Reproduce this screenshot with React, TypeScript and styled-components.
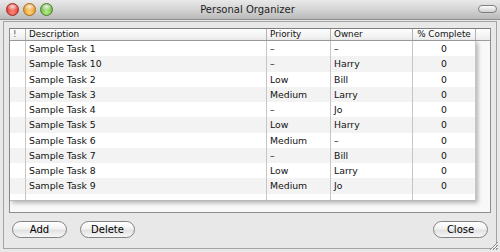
import React from "react";
import styled, { createGlobalStyle } from "styled-components";

const GlobalStyle = createGlobalStyle`
  html, body { margin: 0; padding: 0; }
  body {
    width: 500px;
    height: 252px;
    overflow: hidden;
    background: #e8e8e8;
    font-family: "DejaVu Sans", "Liberation Sans", sans-serif;
    color: #000;
  }
  * { box-sizing: border-box; }
`;

const Window = styled.div`
  position: relative;
  width: 500px;
  height: 252px;
  display: flex;
  flex-direction: column;
  background: #e8e8e8;
`;

const TitleBar = styled.div`
  flex: none;
  height: 20px;
  display: grid;
  grid-template-columns: 1fr auto 1fr;
  align-items: center;
  background: linear-gradient(#e9e9e9 0%, #d4d4d4 50%, #b9b9b9 100%);
  border-bottom: 1px solid #8e8e8e;
`;

const Lights = styled.div`
  display: flex;
  gap: 4px;
  padding-left: 6px;
`;

const Light = styled.span<{ $c1: string; $c2: string; $edge: string }>`
  width: 13px;
  height: 13px;
  border-radius: 50%;
  border: 1px solid ${(p) => p.$edge};
  background:
    radial-gradient(ellipse 60% 40% at 50% 22%, rgba(255,255,255,0.85), rgba(255,255,255,0) 100%),
    radial-gradient(circle at 50% 75%, ${(p) => p.$c1} 0%, ${(p) => p.$c2} 80%);
`;

const Title = styled.div`
  font-size: 10px;
  color: #1e1e1e;
  padding-right: 5px;
  line-height: 12px;
`;

const Pill = styled.span`
  justify-self: end;
  margin-right: 3px;
  margin-top: -1px;
  width: 19px;
  height: 8px;
  border-radius: 4px;
  border: 1px solid #7f7f7f;
  background: linear-gradient(#fdfdfd, #cfcfcf);
`;

const Frame = styled.div`
  flex: 1;
  margin: 1px 3px 3px;
  border: 1px solid #a4a4a4;
  display: flex;
  flex-direction: column;
  padding: 6px 5px 0;
`;

const ScrollPane = styled.div`
  flex: none;
  height: 185px;
  border: 1px solid #8d8d8d;
  border-top-color: #7e7e7e;
  background: #f8f8f8;
  display: flex;
  flex-direction: column;
`;

const Header = styled.div`
  flex: none;
  height: 12px;
  display: flex;
  background: linear-gradient(#ffffff, #ececec);
  border-bottom: 1px solid #9c9c9c;
`;

const HeaderCell = styled.div<{ $w: number; $center?: boolean; $last?: boolean }>`
  flex: none;
  width: ${(p) => p.$w}px;
  border-right: ${(p) => (p.$last ? "none" : "1px solid #b3b3b3")};
  padding-left: ${(p) => (p.$center ? 0 : 3)}px;
  text-align: ${(p) => (p.$center ? "center" : "left")};
  font-size: 8.8px;
  line-height: 11px;
  color: #111;
  white-space: nowrap;
  overflow: hidden;
`;

const Bang = styled.span`
  color: #555;
`;

const Viewport = styled.div`
  flex: 1;
  display: flex;
  padding: 0 14px 11px 0;
`;

const Grid = styled.div`
  flex: none;
  width: 466px;
  display: flex;
  flex-direction: column;
  background: #ffffff;
  border-bottom: 1px solid #b9b9b9;
  box-shadow: 2px 2px 4px rgba(0, 0, 0, 0.28);
`;

const Row = styled.div<{ $alt?: boolean }>`
  flex: none;
  height: 15.25px;
  display: flex;
  background: ${(p) => (p.$alt ? "#f3f3f3" : "#ffffff")};
`;

const Filler = styled.div`
  flex: 1;
  display: flex;
`;

const Cell = styled.div<{ $w: number; $center?: boolean }>`
  flex: none;
  width: ${(p) => p.$w}px;
  border-right: 1px solid #c6c6c6;
  padding-left: ${(p) => (p.$center ? 0 : 3)}px;
  text-align: ${(p) => (p.$center ? "center" : "left")};
  font-size: 9.3px;
  line-height: 15px;
  color: #111;
  white-space: nowrap;
  overflow: hidden;
`;

const ButtonRow = styled.div`
  display: flex;
  align-items: center;
  margin-top: 8px;
  padding: 0 3px;
`;

const Button = styled.button<{ $ml?: string }>`
  flex: none;
  width: 55px;
  height: 17px;
  margin: 0 0 0 ${(p) => p.$ml ?? "0"};
  padding: 0;
  border-radius: 9px;
  border: 1px solid #838383;
  background: linear-gradient(#ffffff 0%, #f2f2f2 45%, #e2e2e2 55%, #f7f7f7 100%);
  font-family: "DejaVu Sans", "Liberation Sans", sans-serif;
  font-size: 10px;
  line-height: 15px;
  color: #000;
`;

const Grip = styled.svg`
  position: absolute;
  right: 1px;
  bottom: 1px;
`;

const widths = [16, 241, 64, 82, 63];

const tasks: [string, string, string, string][] = [
  ["Sample Task 1", "–", "–", "0"],
  ["Sample Task 10", "–", "Harry", "0"],
  ["Sample Task 2", "Low", "Bill", "0"],
  ["Sample Task 3", "Medium", "Larry", "0"],
  ["Sample Task 4", "–", "Jo", "0"],
  ["Sample Task 5", "Low", "Harry", "0"],
  ["Sample Task 6", "Medium", "–", "0"],
  ["Sample Task 7", "–", "Bill", "0"],
  ["Sample Task 8", "Low", "Larry", "0"],
  ["Sample Task 9", "Medium", "Jo", "0"],
];

export default function App() {
  return (
    <>
      <GlobalStyle />
      <Window>
        <TitleBar>
          <Lights>
            <Light $c1="#ff8a80" $c2="#d8261c" $edge="#9e2a22" />
            <Light $c1="#ffd27a" $c2="#e08a10" $edge="#a86a1a" />
            <Light $c1="#b8ec8a" $c2="#5aa830" $edge="#4d7e2c" />
          </Lights>
          <Title>Personal Organizer</Title>
          <Pill />
        </TitleBar>
        <Frame>
          <ScrollPane>
            <Header>
              <HeaderCell $w={widths[0]}>
                <Bang>!</Bang>
              </HeaderCell>
              <HeaderCell $w={widths[1]}>Description</HeaderCell>
              <HeaderCell $w={widths[2]}>Priority</HeaderCell>
              <HeaderCell $w={widths[3]}>Owner</HeaderCell>
              <HeaderCell $w={widths[4]} $center>% Complete</HeaderCell>
              <HeaderCell $w={14} $last />
            </Header>
            <Viewport>
              <Grid>
                {tasks.map((t, i) => (
                  <Row key={t[0]} $alt={i % 2 === 1}>
                    <Cell $w={widths[0]} />
                    <Cell $w={widths[1]}>{t[0]}</Cell>
                    <Cell $w={widths[2]}>{t[1]}</Cell>
                    <Cell $w={widths[3]}>{t[2]}</Cell>
                    <Cell $w={widths[4]} $center>{t[3]}</Cell>
                  </Row>
                ))}
                <Filler>
                  {widths.map((w, i) => (
                    <Cell key={i} $w={w} />
                  ))}
                </Filler>
              </Grid>
            </Viewport>
          </ScrollPane>
          <ButtonRow>
            <Button>Add</Button>
            <Button $ml="13px">Delete</Button>
            <Button $ml="auto">Close</Button>
          </ButtonRow>
        </Frame>
        <Grip width="11" height="11" viewBox="0 0 11 11">
          <path d="M10 2 L2 10 M10 5 L5 10 M10 8 L8 10" stroke="#8a8a8a" strokeWidth="1" />
          <path d="M10 3 L3 10 M10 6 L6 10 M10 9 L9 10" stroke="#f8f8f8" strokeWidth="1" />
        </Grip>
      </Window>
    </>
  );
}
